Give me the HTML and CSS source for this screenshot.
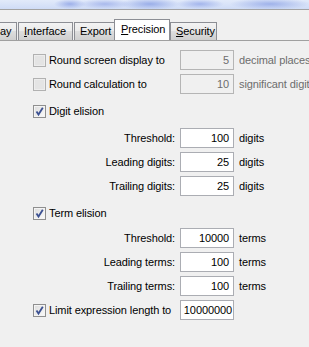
FILE: index.html
```html
<!DOCTYPE html>
<html>
<head>
<meta charset="utf-8">
<title>Options - Precision</title>
<link rel="stylesheet" href="styles.css">
</head>
<body>
<div class="titlebar"></div>
<div class="tabstrip">
	<div class="tab tab-cut">ay</div>
	<div class="tab tab-interface"><u>I</u>nterface</div>
	<div class="tab tab-export">Export</div>
	<div class="tab tab-precision selected"><u>P</u>recision</div>
	<div class="tab tab-security"><u>S</u>ecurity</div>
</div>
<div class="panel">
	<div class="row first">
		<label class="lead check disabled"><span class="box"></span>Round screen display to</label>
		<div class="field disabled">5</div>
		<span class="unit disabled">decimal places</span>
	</div>
	<div class="row">
		<label class="lead check disabled"><span class="box"></span>Round calculation to</label>
		<div class="field disabled">10</div>
		<span class="unit disabled">significant digits</span>
	</div>
	<div class="row group">
		<label class="lead check"><span class="box on"><svg viewBox="0 0 11 11" width="11" height="11"><path d="M2.5 5.5 L4.5 8.5 L8.8 1.8" fill="none" stroke="#3c5192" stroke-width="1.8"/></svg></span>Digit elision</label>
	</div>
	<div class="row group">
		<span class="lead right">Threshold:</span>
		<div class="field">100</div>
		<span class="unit">digits</span>
	</div>
	<div class="row">
		<span class="lead right">Leading digits:</span>
		<div class="field">25</div>
		<span class="unit">digits</span>
	</div>
	<div class="row">
		<span class="lead right">Trailing digits:</span>
		<div class="field">25</div>
		<span class="unit">digits</span>
	</div>
	<div class="row group">
		<label class="lead check"><span class="box on"><svg viewBox="0 0 11 11" width="11" height="11"><path d="M2.5 5.5 L4.5 8.5 L8.8 1.8" fill="none" stroke="#3c5192" stroke-width="1.8"/></svg></span>Term elision</label>
	</div>
	<div class="row sub">
		<span class="lead right">Threshold:</span>
		<div class="field">10000</div>
		<span class="unit">terms</span>
	</div>
	<div class="row">
		<span class="lead right">Leading terms:</span>
		<div class="field">100</div>
		<span class="unit">terms</span>
	</div>
	<div class="row">
		<span class="lead right">Trailing terms:</span>
		<div class="field">100</div>
		<span class="unit">terms</span>
	</div>
	<div class="row">
		<label class="lead check"><span class="box on"><svg viewBox="0 0 11 11" width="11" height="11"><path d="M2.5 5.5 L4.5 8.5 L8.8 1.8" fill="none" stroke="#3c5192" stroke-width="1.8"/></svg></span>Limit expression length to</label>
		<div class="field tight">10000000</div>
	</div>
</div>
</body>
</html>
```

FILE: styles.css
```css
html, body { margin: 0; padding: 0; }
body { width: 309px; height: 347px; overflow: hidden; background: #f0f0f0; font: 11px/13px 'Liberation Sans', Arial, sans-serif; letter-spacing: -0.1px; color: #000; }

/* window chrome */
.titlebar { height: 9px; border-bottom: 1px solid #a3a3a3;
	background:
		radial-gradient(ellipse 16px 5px at 70px 4px, #9db0ea, transparent),
		radial-gradient(ellipse 26px 5px at 105px 4px, #a9b9ec, transparent),
		radial-gradient(ellipse 30px 6px at 150px 4px, #9aaee9, transparent),
		radial-gradient(ellipse 24px 5px at 200px 4px, #a3b5ec, transparent),
		radial-gradient(ellipse 40px 6px at 270px 4px, #9fb2ea, transparent),
		linear-gradient(#e2eafa, #cfdcf6); }

/* tabs */
.tabstrip { display: flex; align-items: flex-end; height: 30px; border-bottom: 1px solid #a0a0a0; overflow: hidden; }
.tab { box-sizing: border-box; flex-shrink: 0; height: 18px; padding: 2px 0 0 5px; border: 1px solid #8c8e94; border-bottom: 0; margin-right: 1px; white-space: nowrap; overflow: hidden;
	background: linear-gradient(#f3f3f3 0%, #ebebeb 45%, #dddddd 50%, #cfcfcf 100%); }
.tab u { text-decoration: underline; }
.tab-cut { width: 18px; margin-left: -1px; padding-left: 0; }
.tab-interface { width: 55px; }
.tab-export { width: 41px; margin-right: 0; }
.tab-precision { width: 56px; }
.tab-security { width: 47px; }
.tab.selected { height: 22px; margin: 0 0 -1px -1px; padding: 3px 0 0 6px; background: #fff; position: relative; }

/* panel rows */
.panel { padding: 9px 0 0 33px; }
.row { display: flex; align-items: center; height: 20px; margin-top: 4px; }
.row.first { margin-top: 0; }
.row.group { margin-top: 7px; }
.row.sub { margin-top: 5px; }
.lead { flex-shrink: 0; width: 142px; margin-right: 5px; white-space: nowrap; }
.lead.right { text-align: right; }
.check { display: flex; align-items: center; }
.box { box-sizing: border-box; flex-shrink: 0; width: 13px; height: 13px; margin-right: 3px; border: 1px solid #8f8f8f; display: flex; align-items: center; justify-content: center;
	background: linear-gradient(135deg, #dcdcdc, #fbfbfb); box-shadow: inset 0 0 0 1px #f4f4f4; }
.check.disabled .box { border-color: #b1b1b1; background: #e4e4e4; box-shadow: inset 0 0 0 1px #ededed; }
.field { box-sizing: border-box; flex-shrink: 0; width: 54px; height: 20px; padding: 3px 4px 0 0; border: 1px solid #abadb3; background: #fff; text-align: right; }
.field.tight { padding-right: 1px; }
.field.disabled { background: #f0f0f0; border-color: #b5b5b5; color: #6d6d6d; }
.unit { flex-shrink: 0; margin-left: 5px; white-space: nowrap; }
.unit.disabled { color: #6d6d6d; }
```
